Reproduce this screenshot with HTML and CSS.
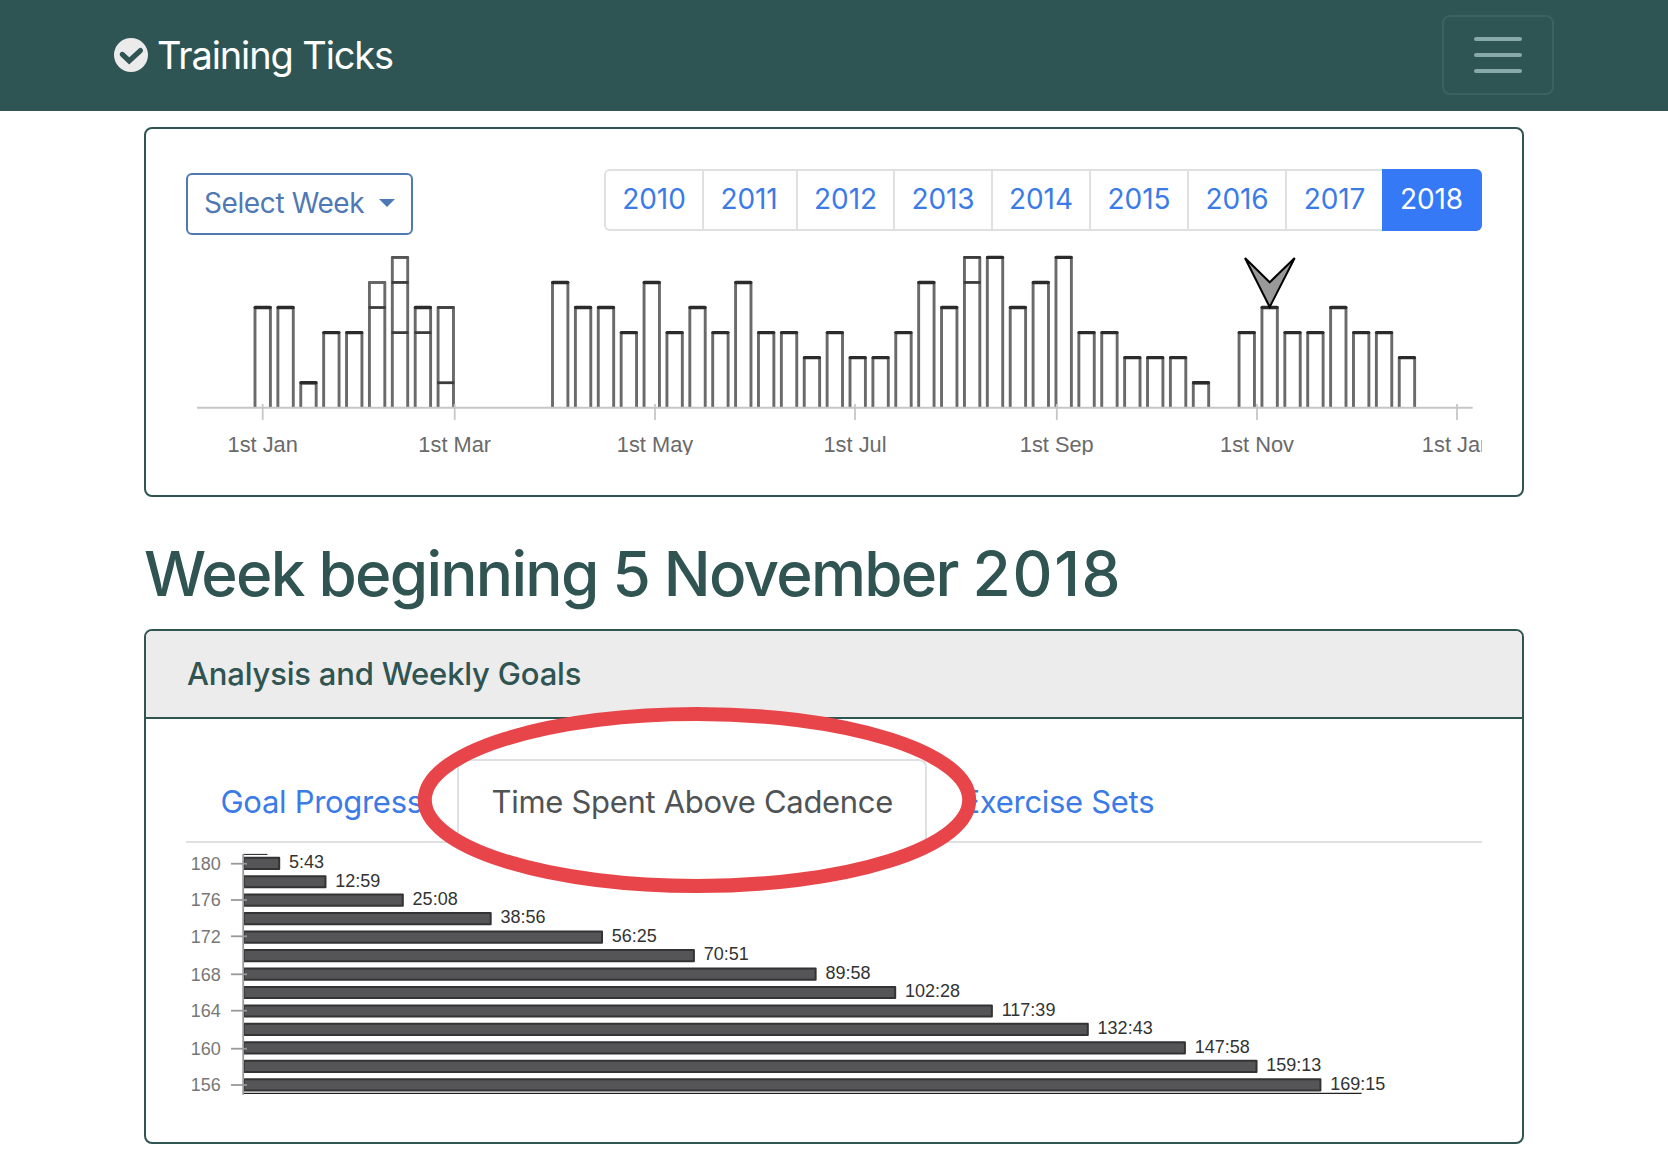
FILE: index.html
```html
<!DOCTYPE html>
<html lang="en">
<head>
<meta charset="utf-8">
<title>Training Ticks</title>
<link rel="stylesheet" href="styles.css">
</head>
<body>
<header class="navbar">
  <a class="brand">
    <svg class="brand-icon" viewBox="0 0 34 34"><circle cx="17" cy="17" r="17" fill="#ebebeb"/><path d="M8.3 16.4 L15.2 23 L26.4 12.6" fill="none" stroke="#2f5452" stroke-width="5.2" stroke-linecap="round"/></svg>
    <span class="brand-name">Training Ticks</span>
  </a>
  <button class="toggler" aria-label="Menu"><i></i><i></i><i></i></button>
</header>
<main class="container">
  <section class="card weeks">
    <div class="toolbar">
      <button class="select"><span class="select-text">Select Week</span><i class="caret"></i></button>
      <nav class="years">
        <a>2010</a><a class="y11">2011</a><a class="y12">2012</a><a>2013</a><a>2014</a><a>2015</a><a>2016</a><a class="y17">2017</a><a class="active">2018</a>
      </nav>
    </div>
    <svg id="year-chart" class="year-chart" viewBox="186 240 1296 215"></svg>
  </section>
  <h1>Week beginning 5 November <span class="year">2018</span></h1>
  <section class="card analysis">
    <h2>Analysis and Weekly Goals</h2>
    <nav class="tabs">
      <a class="tab goal">Goal Progress</a>
      <a class="tab current">Time Spent Above Cadence</a>
      <a class="tab sets">Exercise Sets</a>
      <svg class="highlight" viewBox="0 0 560 188"><ellipse cx="280" cy="94" rx="272.2" ry="86" fill="none" stroke="#e8454a" stroke-width="14"/></svg>
    </nav>
    <svg id="cadence-chart" class="cadence-chart" viewBox="186 843 1296 260"></svg>
  </section>
</main>
<script src="charts.js"></script>
</body>
</html>
```
FILE: styles.css
```css
* { box-sizing: border-box; }
body { margin: 0; background: #fff; font-family: Inter, "Liberation Sans", sans-serif; color: #2f5452; overflow: hidden; }
button { font: inherit; background: none; padding: 0; }
svg { display: block; }
.navbar { height: 111px; background: #2e5453; display: flex; align-items: center; justify-content: space-between; padding: 0 114px 1px; }
.brand { display: flex; align-items: center; gap: 9px; color: #fff; font-size: 38px; letter-spacing: -1.12px; }
.brand-icon { width: 34px; height: 34px; }
.toggler { width: 112px; height: 80px; border: 2px solid #3d6160; border-radius: 8px; display: flex; flex-direction: column; align-items: center; justify-content: center; gap: 12px; }
.toggler i { width: 48px; height: 4px; border-radius: 2px; background: #8aa9a9; }
.container { width: 1380px; margin: 16px auto 0; }
.card { border: 2px solid #2f5452; border-radius: 8px; }
.weeks { height: 370px; padding: 40px 40px 0; }
.toolbar { height: 71px; display: flex; justify-content: space-between; align-items: flex-start; }
.select { width: 227px; height: 62px; margin-top: 4px; border: 2px solid #4f79b4; border-radius: 6px; color: #4f79b4; font-size: 28px; letter-spacing: -0.4px; display: flex; align-items: center; padding: 0 0 2px 16px; }
.caret { margin-left: 15px; border: 8px solid transparent; border-top-color: #4f79b4; border-bottom: 0; }
.years { display: flex; height: 62px; width: 878px; font-size: 28px; letter-spacing: -0.1px; line-height: 57px; color: #3b7be8; text-align: center; }
.years a { width: 98px; border: 2px solid #dfe0e2; border-right: 0; }
.years a:first-child { border-radius: 6px 0 0 6px; }
.years .y11 { width: 94px; padding-right: 2px; }
.years .y12, .years .y17 { width: 97px; }
.years .active { flex: 1; background: #3579f6; border-color: #3579f6; color: #fff; border-radius: 0 6px 6px 0; padding-right: 3px; }
.year-chart { width: 1296px; height: 215px; overflow: hidden; }
svg text { font-family: "Liberation Sans", Arial, sans-serif; }
h1 { margin: 0; height: 132px; padding-top: 37px; font-size: 62px; letter-spacing: -1.73px; line-height: 80px; font-weight: 500; white-space: nowrap; }
.year { letter-spacing: 1.7px; }
.analysis { height: 515px; }
h2 { margin: 0; height: 88px; line-height: 86px; padding-left: 41px; font-size: 31px; letter-spacing: -0.19px; font-weight: 500; background: #ececec; border-bottom: 2px solid #2f5452; border-radius: 6px 6px 0 0; }
.tabs { position: relative; display: flex; height: 84px; margin: 40px 40px 0; border-bottom: 2px solid #dfe0e2; font-size: 31px; letter-spacing: -0.3px; line-height: 81px; color: #3b7be8; white-space: nowrap; }
.tab { height: 84px; border: 2px solid transparent; border-bottom: 0; padding-left: 32.5px; }
.goal { width: 271px; }
.current { width: 470px; color: #505356; background: #fff; border-color: #dfe0e2; border-radius: 8px 8px 0 0; }
.highlight { position: absolute; left: 231px; top: -53px; width: 560px; height: 188px; }
.cadence-chart { width: 1296px; height: 260px; margin: 0 40px; }
```
FILE: charts.js
```js
const NS = 'http://www.w3.org/2000/svg';
function add(svg, name, attrs, text) {
  const el = document.createElementNS(NS, name);
  for (const key in attrs) el.setAttribute(key, attrs[key]);
  if (text) el.textContent = text;
  svg.appendChild(el);
}
function line(svg, x1, y1, x2, y2, stroke, width) {
  add(svg, 'line', { x1, y1, x2, y2, stroke, 'stroke-width': width });
}

// Sessions per week; 0 is a week without training.
const weeks = [4,4,1,3,3,5,6,4,4,0,0,0,0,5,4,4,3,5,3,4,3,5,3,3,2,3,2,2,3,5,4,6,6,4,5,6,3,3,2,2,2,1,0,3,4,3,3,4,3,3,2];
const splits = { 5: [4], 6: [5, 3], 7: [3], 8: [1], 31: [5] };
const topColour = { 5: '#666', 6: '#555', 8: '#444', 31: '#3c3c3c' };
const year = document.getElementById('year-chart');
const level = n => 407.8 - n * 25.07;
weeks.forEach((n, k) => {
  if (!n) return;
  const x = 262.7 + k * 22.885, y = level(n);
  add(year, 'path', { d: `M${x - 7.7} 407V${y}H${x + 7.7}V407`, fill: 'none', stroke: '#6a6a6a', 'stroke-width': 2.9, 'stroke-linejoin': 'round' });
  add(year, 'line', { x1: x - 7.4, x2: x + 7.4, y1: y, y2: y, stroke: topColour[k] || '#2b2b2b', 'stroke-width': topColour[k] ? 2.8 : 3.4, 'stroke-linecap': 'round' });
  (splits[k] || []).forEach(s => line(year, x - 8.5, level(s), x + 8.5, level(s), '#3c3c3c', 2.8));
});
line(year, 197, 407.8, 1472.7, 407.8, '#c6c6c6', 2);
[[262.7, 'Jan'], [454.7, 'Mar'], [655, 'May'], [855, 'Jul'], [1056.8, 'Sep'], [1257, 'Nov'], [1457, 'Jan']].forEach(([x, m]) => {
  line(year, x, 404, x, 420, '#c6c6c6', 1.8);
  add(year, 'text', { x, y: 452, 'text-anchor': 'middle', 'font-size': 21.8, fill: '#6a6a6a' }, '1st ' + m);
});
add(year, 'path', { d: 'M1245 258L1269.7 282.3L1294.7 258L1269.7 307Z', fill: '#999', stroke: '#000', 'stroke-width': 2 });

// Time above each cadence, from 180 down to 156 in steps of 2.
const times = ['5:43','12:59','25:08','38:56','56:25','70:51','89:58','102:28','117:39','132:43','147:58','159:13','169:15'];
const cad = document.getElementById('cadence-chart');
times.forEach((t, i) => {
  const [m, s] = t.split(':').map(Number);
  const end = 243.8 + (m + s / 60) * 6.367, y = 856.7 + i * 18.46;
  add(cad, 'rect', { x: 244, y: y + 1, width: end - 245, height: 11.2, fill: '#555557', stroke: '#333335', 'stroke-width': 2, 'stroke-linejoin': 'round' });
  add(cad, 'text', { x: end + 8.8, y: y + 11.4, 'font-size': 18, fill: '#333' }, t);
});
line(cad, 243, 854.4, 267.5, 854.4, '#222', 1);
line(cad, 243, 1093.4, 1361.6, 1093.4, '#222', 1.2);
line(cad, 243.2, 854, 243.2, 1094.8, '#999', 1.8);
[863.7, 900, 936.3, 974.3, 1010.7, 1048.7, 1085].forEach((y, i) => {
  line(cad, 231, y, 247, y, '#999', 1.8);
  add(cad, 'text', { x: 220.7, y: y + 6.4, 'text-anchor': 'end', 'font-size': 18, fill: '#777' }, String(180 - i * 4));
});
```
